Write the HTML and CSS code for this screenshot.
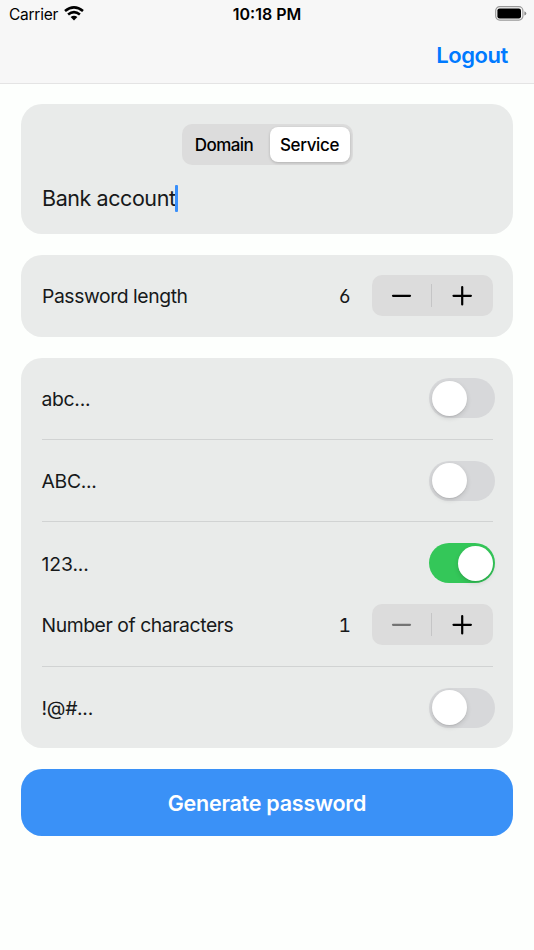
FILE: index.html
```html
<!DOCTYPE html>
<html lang="en">
<head>
<meta charset="utf-8">
<title>Password generator</title>
<link rel="stylesheet" href="styles.css">
</head>
<body>
<header class="header">
  <div class="status">
    <div class="carrier"><span class="carrier-name">Carrier</span>
      <svg class="wifi" width="20" height="15" viewBox="0 0 20 15"><g fill="none" stroke="#000" stroke-width="2.6"><path d="M1 5.1Q10 -2.3 19 5.1"/><path d="M4.1 8.5Q10 3.6 15.9 8.5"/></g><path d="M6.6 11.1Q10 8.4 13.4 11.1L10 14.5Z"/></svg>
    </div>
    <div class="clock"><span class="clock-text">10:18 PM</span></div>
    <svg class="battery" width="32" height="15" viewBox="0 0 32 15"><rect x=".7" y=".7" width="27.2" height="13.4" rx="4" fill="none" stroke="#999" stroke-width="1.2"/><rect x="2.4" y="2.4" width="23.6" height="10" rx="2.2"/><path d="M29.4 5.2Q31.3 6 31.3 7.4T29.4 9.6Z" fill="#888"/></svg>
  </div>
  <nav class="nav"><a class="logout">Logout</a></nav>
</header>
<main class="content">
  <section class="card account">
    <div class="segments"><span class="segment domain">Domain</span><span class="segment selected"><span class="service">Service</span></span></div>
    <div class="field"><span class="field-text">Bank account</span><i class="caret"></i></div>
  </section>
  <section class="card length row">
    <span class="label password-label">Password length</span><span class="value">6</span>
    <div class="stepper"><svg viewBox="0 0 60 41"><path d="M22 20.8H39"/></svg><i class="split"></i><svg viewBox="0 0 60 41"><path d="M21.5 20.8H38.9M30.2 12.1V29.5"/></svg></div>
  </section>
  <section class="card options">
    <div class="row option"><span class="label abc">abc...</span><span class="toggle"><i class="knob"></i></span></div>
    <div class="row option second"><span class="label upper">ABC...</span><span class="toggle"><i class="knob"></i></span></div>
    <div class="row option third"><span class="label digits">123...</span><span class="toggle on"><i class="knob"></i></span></div>
    <div class="row count">
      <span class="label count-label">Number of characters</span><span class="value">1</span>
      <div class="stepper"><svg class="disabled" viewBox="0 0 60 41"><path d="M22 20.8H39"/></svg><i class="split"></i><svg viewBox="0 0 60 41"><path d="M21.5 20.8H38.9M30.2 12.1V29.5"/></svg></div>
    </div>
    <div class="row option last"><span class="label symbols">!@#...</span><span class="toggle"><i class="knob"></i></span></div>
  </section>
  <button class="generate"><span class="generate-text">Generate password</span></button>
</main>
</body>
</html>
```
FILE: styles.css
```css
* { box-sizing: border-box; }
body { margin: 0; height: 950px; background: #fdfffd; color: #17191a; font-family: Inter, "Liberation Sans", sans-serif; overflow: hidden; }
.header { height: 83.5px; background: #f7f7f7; border-bottom: 1.5px solid #e4e4e4; }
.status { height: 28px; display: grid; grid-template-columns: 1fr 100px 1fr; align-items: center; padding: 0 7px 1px 9px; color: #000; }
.carrier { display: flex; align-items: center; gap: 6px; font-size: 15.5px; letter-spacing: -.25px; }
.carrier-name { padding-top: 1px; }
.clock { font-size: 16px; font-weight: 600; text-align: center; white-space: nowrap; padding: 1px 2px 0 0; }
.battery { justify-self: end; }
.nav { height: 54px; display: flex; align-items: center; justify-content: flex-end; padding-right: 26px; }
.logout { color: #007aff; font-size: 22px; font-weight: 600; letter-spacing: -.4px; }
.content { padding: 20px 21px 0; display: flex; flex-direction: column; gap: 21px; }
.card { background: #e9ebea; border-radius: 21px; }
.account { height: 130px; padding-top: 20.5px; }
.segments { width: 171px; height: 41px; margin: 0 auto; padding: 3px; display: grid; grid-template-columns: 85px 80px; background: #dcdcdc; border-radius: 10px; font-size: 17px; font-weight: 500; color: #000; }
.segment { display: flex; align-items: center; justify-content: center; }
.domain { padding-right: 6px; letter-spacing: -.55px; }
.selected { background: #fff; border-radius: 8px; box-shadow: 0 1px 3px #0003; letter-spacing: -.35px; }
.field { height: 27px; margin: 20px 0 0 21px; display: flex; align-items: center; font-size: 21.5px; letter-spacing: -.43px; }
.field-text { padding-bottom: 2px; }
.caret { width: 3px; height: 27px; background: #398ffa; border-radius: 1px; margin-left: -.8px; }
.row { display: flex; align-items: center; }
.length { height: 82px; padding: 0 20.5px 0 21px; }
.label { font-size: 19.35px; white-space: nowrap; letter-spacing: -.43px; }
.abc, .upper, .symbols { letter-spacing: -.3px; }
.digits { letter-spacing: -.1px; }
.value { margin-left: auto; margin-right: 20.5px; font-size: 19.35px; font-feature-settings: "tnum", "ss01"; }
.stepper { width: 121px; height: 41px; display: flex; align-items: center; background: #dcdcdc; border-radius: 10px; }
.stepper svg { width: 60px; height: 41px; fill: none; stroke: #000; stroke-width: 2.2; stroke-linecap: round; margin-left: -.5px; }
.stepper .disabled { stroke: #747474; }
.split { width: 1px; height: 23px; background: #c5c5c6; }
.options { height: 390px; padding: 0 20.5px; }
.option { height: 82px; border-bottom: 1px solid #d1d3d3; justify-content: space-between; }
.toggle { width: 66px; height: 40px; padding: 2.5px; margin-right: -2.5px; border-radius: 20px; background: #d7d8da; display: flex; }
.knob { width: 35px; height: 35px; border-radius: 50%; background: #fff; box-shadow: 0 2px 5px #0002, 0 1px 1px #0001; }
.on { background: #34c759; justify-content: flex-end; }
.second { height: 82.5px; padding-top: 1px; }
.third { height: 82px; border: 0; }
.count { height: 62.5px; padding-bottom: 21px; border-bottom: 1px solid #d1d3d3; }
.count-label, .count .value { padding-top: 2px; }
.abc, .digits { padding-top: 1px; }
.last { height: 81px; border: 0; padding-top: 1px; }
.generate { height: 67.5px; border: 0; border-radius: 21px; background: #3a91f7; color: #fff; font: 600 21.5px Inter, sans-serif; letter-spacing: -.25px; padding-top: 3px; }
```
